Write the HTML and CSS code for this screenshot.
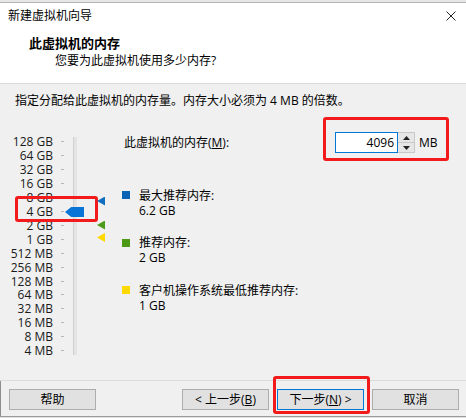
FILE: index.html
```html
<!DOCTYPE html>
<html lang="zh-CN">
<head>
<meta charset="utf-8">
<title>新建虚拟机向导</title>
<link rel="stylesheet" href="styles.css">
</head>
<body>
<div class="window">
  <div class="bgstrip"></div>
  <div class="titlebar">
    <span class="wintitle">新建虚拟机向导</span>
    <svg class="close" width="10" height="10" viewBox="0 0 10 10"><path d="M0.5 0.5 L9.5 9.5 M9.5 0.5 L0.5 9.5" stroke="#222" stroke-width="1" fill="none"/></svg>
  </div>
  <div class="header">
    <div class="h-title">此虚拟机的内存</div>
    <div class="h-sub">您要为此虚拟机使用多少内存?</div>
  </div>
  <div class="content">
    <div class="intro">指定分配给此虚拟机的内存量。内存大小必须为 4 MB 的倍数。</div>
    <div class="main">
      <div class="scale">
        <div class="labels">
          <div class="row"><span class="lab">128 GB</span><span class="tick"></span></div>
          <div class="row"><span class="lab">64 GB</span><span class="tick"></span></div>
          <div class="row"><span class="lab">32 GB</span><span class="tick"></span></div>
          <div class="row"><span class="lab">16 GB</span><span class="tick"></span></div>
          <div class="row"><span class="lab">8 GB</span><span class="tick"></span></div>
          <div class="row"><span class="lab">4 GB</span><span class="tick"></span></div>
          <div class="row"><span class="lab">2 GB</span><span class="tick"></span></div>
          <div class="row"><span class="lab">1 GB</span><span class="tick"></span></div>
          <div class="row"><span class="lab">512 MB</span><span class="tick"></span></div>
          <div class="row"><span class="lab">256 MB</span><span class="tick"></span></div>
          <div class="row"><span class="lab">128 MB</span><span class="tick"></span></div>
          <div class="row"><span class="lab">64 MB</span><span class="tick"></span></div>
          <div class="row"><span class="lab">32 MB</span><span class="tick"></span></div>
          <div class="row"><span class="lab">16 MB</span><span class="tick"></span></div>
          <div class="row"><span class="lab">8 MB</span><span class="tick"></span></div>
          <div class="row"><span class="lab">4 MB</span><span class="tick"></span></div>
        </div>
        <div class="track"></div>
        <div class="mark mark-scale"></div>
        <div class="thumb"></div>
        <div class="tri tri-blue"></div>
        <div class="tri tri-green"></div>
        <div class="tri tri-yellow"></div>
      </div>
      <div class="panel">
        <div class="mem-row">
          <span class="mem-label">此虚拟机的内存(<u>M</u>):</span>
          <span class="input">4096</span>
          <span class="spin">
            <span class="spin-half"><svg width="7" height="4" viewBox="0 0 7 4"><path d="M3.5 0 L7 4 L0 4 Z" fill="#222"/></svg></span>
            <span class="spin-half"><svg width="7" height="4" viewBox="0 0 7 4"><path d="M0 0 L7 0 L3.5 4 Z" fill="#222"/></svg></span>
          </span>
          <span class="unit">MB</span>
          <div class="mark mark-mem"></div>
        </div>
        <div class="legend">
          <div class="item">
            <span class="sq sq-blue"></span>
            <div class="item-text"><div>最大推荐内存:</div><div>6.2 GB</div></div>
          </div>
          <div class="item">
            <span class="sq sq-green"></span>
            <div class="item-text"><div>推荐内存:</div><div>2 GB</div></div>
          </div>
          <div class="item">
            <span class="sq sq-yellow"></span>
            <div class="item-text"><div>客户机操作系统最低推荐内存:</div><div>1 GB</div></div>
          </div>
        </div>
      </div>
    </div>
  </div>
  <div class="footer">
    <button class="btn">帮助</button>
    <span class="spacer"></span>
    <button class="btn">&lt; 上一步(<u>B</u>)</button>
    <button class="btn btn-default">下一步(<u>N</u>) &gt;<span class="mark mark-next"></span></button>
    <button class="btn">取消</button>
  </div>
  <div class="bottomstrip"></div>
</div>
</body>
</html>
```
FILE: styles.css
```css
* { box-sizing: border-box; }
html, body { margin: 0; padding: 0; }
body {
  width: 466px;
  height: 418px;
  overflow: hidden;
  background: #f0f0f0;
  color: #000;
  font-family: "Open Sans", "Noto Sans CJK SC", sans-serif;
  font-size: 12px;
}
.window {
  height: 418px;
  display: flex;
  flex-direction: column;
}
.bgstrip {
  height: 3px;
  background: #e6e6e6;
  border-bottom: 1px solid #b4b4b4;
}
.titlebar {
  height: 25px;
  background: #fff;
  display: flex;
  align-items: center;
  justify-content: space-between;
  padding: 0 10px 0 8px;
}
.wintitle { line-height: 16px; }
.close { display: block; }
.header {
  background: #fff;
  padding: 6px 0 13px;
  border-bottom: 1px solid #dadada;
}
.h-title {
  padding-left: 29px;
  line-height: 18px;
  font-size: 13px;
  font-weight: 700;
}
.h-sub {
  padding-left: 55px;
  line-height: 18px;
}
.content {
  flex: 1;
  padding-top: 8px;
}
.intro {
  padding-left: 15px;
  line-height: 18px;
}
.main {
  display: flex;
  align-items: flex-start;
  padding-top: 22px;
}
.scale {
  position: relative;
  flex: none;
  width: 122px;
  margin-top: 3px;
  display: flex;
  align-items: flex-start;
}
.labels {
  display: flex;
  flex-direction: column;
}
.row {
  height: 13.92px;
  display: flex;
  align-items: center;
}
.lab {
  width: 53px;
  text-align: right;
  line-height: 13px;
  color: #1a1a1a;
}
.tick {
  width: 3px;
  height: 1px;
  margin-left: 8px;
  background: #b8b8b8;
}
.track {
  margin-left: 9px;
  margin-top: 2px;
  width: 4px;
  height: 218px;
  background: #e4e4e4;
  border-left: 1px solid #d0d0d0;
}
.mark {
  position: absolute;
  border: 3px solid #f21a1a;
  border-radius: 3px;
  pointer-events: none;
}
.mark-scale { left: 15px; top: 61px; width: 83px; height: 26px; }
.thumb {
  position: absolute;
  left: 65px;
  top: 72px;
  width: 19px;
  height: 10px;
  background: #0a74d6;
  clip-path: polygon(0 50%, 33% 0, 100% 0, 100% 100%, 33% 100%);
}
.tri {
  position: absolute;
  left: 97px;
  width: 8px;
  height: 9px;
  clip-path: polygon(0 50%, 100% 0, 100% 100%);
}
.tri-blue { top: 61.5px; background: #106ebe; }
.tri-green { top: 85.5px; background: #4e9a1c; }
.tri-yellow { top: 98px; background: #ffd800; }
.panel { flex: 1; }
.mem-row {
  position: relative;
  display: flex;
  align-items: center;
  height: 21px;
}
.mem-label {
  width: 213px;
  padding-left: 2px;
  line-height: 21px;
}
.input {
  width: 63px;
  height: 21px;
  background: #fff;
  border: 1px solid #0078d7;
  text-align: right;
  padding-right: 3px;
  line-height: 19px;
}
.spin {
  width: 17px;
  height: 21px;
  display: flex;
  flex-direction: column;
  border: 1px solid #c8c8c8;
  border-left: none;
  background: #e6e6e6;
}
.spin-half {
  flex: 1;
  display: flex;
  align-items: center;
  justify-content: center;
}
.spin-half + .spin-half { border-top: 1px solid #c8c8c8; }
.spin-half svg { display: block; }
.unit { margin-left: 4px; line-height: 21px; }
.mark-mem { left: 201px; top: -15px; width: 126px; height: 44px; }
.legend {
  margin-top: 34.5px;
  display: flex;
  flex-direction: column;
  gap: 17.5px;
}
.item { display: flex; align-items: flex-start; }
.sq {
  flex: none;
  width: 8px;
  height: 8px;
  margin-top: 3.5px;
  margin-right: 9px;
}
.sq-blue { background: #0a63b4; }
.sq-green { background: #4a9a16; }
.sq-yellow { background: #ffd800; }
.item-text { line-height: 15px; }
.footer {
  height: 36px;
  border-top: 1px solid #dcdcdc;
  padding: 8px 7px 6px 9px;
  display: flex;
  gap: 8px;
  box-shadow: inset 1px 0 0 #8e8e8e;
}
.spacer { flex: 1; }
.btn {
  position: relative;
  width: 87px;
  height: 21px;
  padding: 0;
  margin: 0;
  border: 1px solid #adadad;
  background: #e1e1e1;
  font: inherit;
  color: #000;
  line-height: 19px;
  text-align: center;
}
.btn-default { border-color: #0078d7; }
.mark-next { left: -5px; top: -14px; width: 97px; height: 38px; }
.bottomstrip {
  height: 2px;
  border-top: 1px solid #9a9a9a;
  background: #e0e0e0;
}
```
